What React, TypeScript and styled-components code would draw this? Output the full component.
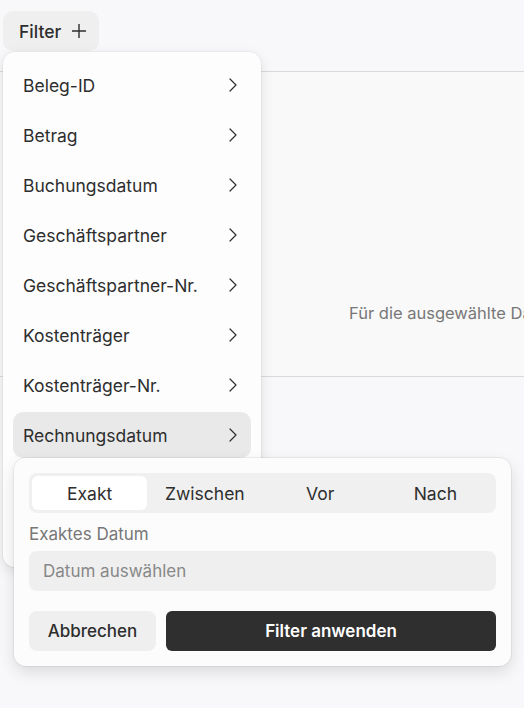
import React, { useState } from "react";
import styled, { createGlobalStyle } from "styled-components";

const GlobalStyle = createGlobalStyle`
	html, body {
		margin: 0;
		padding: 0;
		background-color: #f8f8fa;
		font-family: Inter, "Noto Sans", "Liberation Sans", sans-serif;
		color: #2e2e2e;
	}
	* {
		box-sizing: border-box;
	}
`;

const Page = styled.div`
	position: relative;
	width: 524px;
	height: 708px;
	overflow: hidden;
`;

const Toolbar = styled.div`
	height: 72px;
	padding: 11px 3px;
	border-bottom: 1px solid #dadada;
`;

const FilterButton = styled.button`
	height: 40px;
	display: flex;
	align-items: center;
	gap: 10px;
	padding: 0 12px 0 16px;
	border: 0;
	border-radius: 10px;
	background-color: #efefef;
	font-family: inherit;
	font-size: 17.5px;
	font-weight: 500;
	color: #2e2e2e;
	cursor: pointer;
`;

const EmptyState = styled.div`
	height: 305px;
	padding: 230px 0 0 349px;
	background-color: #f9f9f9;
	border-bottom: 1px solid #dadada;
	font-size: 16.5px;
	line-height: 22px;
	color: #777;
	white-space: nowrap;
	overflow: hidden;
`;

const Menu = styled.div`
	position: absolute;
	top: 52px;
	left: 3px;
	width: 258px;
	height: 515px;
	padding: 10px;
	display: flex;
	flex-direction: column;
	gap: 4px;
	background-color: #fdfdfd;
	border-radius: 12px;
	box-shadow: 0 0 0 1px rgba(0, 0, 0, 0.04), 0 4px 14px rgba(0, 0, 0, 0.1);
	z-index: 10;
`;

const MenuItem = styled.div<{ $active?: boolean }>`
	height: 46px;
	flex-shrink: 0;
	display: flex;
	align-items: center;
	justify-content: space-between;
	padding: 0 14px 0 10px;
	border-radius: 10px;
	background-color: ${(p) => (p.$active ? "#e9e9e9" : "transparent")};
	font-size: 17.5px;
	color: #2e2e2e;
	cursor: pointer;
`;

const Popover = styled.div`
	position: absolute;
	top: 458px;
	left: 14px;
	width: 497px;
	padding: 15px;
	background-color: #fcfcfc;
	border-radius: 12px;
	box-shadow: 0 0 0 1px rgba(0, 0, 0, 0.05), 0 6px 16px rgba(0, 0, 0, 0.12);
	z-index: 11;
`;

const Tabs = styled.div`
	height: 40px;
	padding: 3px;
	display: grid;
	grid-template-columns: repeat(4, 1fr);
	background-color: #f0f0f0;
	border-radius: 8px;
`;

const Tab = styled.button<{ $active?: boolean }>`
	border: 0;
	border-radius: 6px;
	background-color: ${(p) => (p.$active ? "#ffffff" : "transparent")};
	font-family: inherit;
	font-size: 17.5px;
	color: #2e2e2e;
	cursor: pointer;
`;

const FieldLabel = styled.div`
	margin-top: 10px;
	font-size: 17px;
	line-height: 22px;
	color: #777;
`;

const DateInput = styled.input`
	display: block;
	width: 100%;
	height: 40px;
	margin-top: 6px;
	padding: 0 14px;
	border: 0;
	border-radius: 8px;
	background-color: #efefef;
	font-family: inherit;
	font-size: 17px;
	color: #2e2e2e;
	outline: none;
	&::placeholder {
		color: #888;
	}
`;

const Actions = styled.div`
	display: flex;
	gap: 10px;
	margin-top: 20px;
`;

const ActionButton = styled.button<{ $primary?: boolean }>`
	height: 40px;
	flex: ${(p) => (p.$primary ? "1" : "0 0 127px")};
	border: 0;
	border-radius: ${(p) => (p.$primary ? "6px" : "8px")};
	background-color: ${(p) => (p.$primary ? "#2f2f2f" : "#efefef")};
	color: ${(p) => (p.$primary ? "#ffffff" : "#2e2e2e")};
	font-family: inherit;
	font-size: 17px;
	font-weight: ${(p) => (p.$primary ? 600 : 500)};
	cursor: pointer;
`;

const PlusIcon = () => (
	<svg width="16" height="16" viewBox="0 0 16 16" fill="none">
		<path d="M8 1v14M1 8h14" stroke="#2e2e2e" strokeWidth="1.4" />
	</svg>
);

const ChevronIcon = () => (
	<svg width="8" height="14" viewBox="0 0 8 14" fill="none">
		<path d="M1 1l6 6-6 6" stroke="#2e2e2e" strokeWidth="1.2" strokeLinecap="round" strokeLinejoin="round" />
	</svg>
);

const fields = [
	"Beleg-ID",
	"Betrag",
	"Buchungsdatum",
	"Geschäftspartner",
	"Geschäftspartner-Nr.",
	"Kostenträger",
	"Kostenträger-Nr.",
	"Rechnungsdatum",
];

const modes = ["Exakt", "Zwischen", "Vor", "Nach"];

const App: React.FC = () => {
	const [mode, setMode] = useState("Exakt");
	return (
		<Page>
			<GlobalStyle />
			<Toolbar>
				<FilterButton type="button">
					Filter
					<PlusIcon />
				</FilterButton>
			</Toolbar>
			<EmptyState>Für die ausgewählte Daten sind keine Einträge vorhanden.</EmptyState>
			<Menu>
				{fields.map((f) => (
					<MenuItem key={f} $active={f === "Rechnungsdatum"}>
						{f}
						<ChevronIcon />
					</MenuItem>
				))}
			</Menu>
			<Popover>
				<Tabs>
					{modes.map((m) => (
						<Tab key={m} type="button" $active={m === mode} onClick={() => setMode(m)}>
							{m}
						</Tab>
					))}
				</Tabs>
				<FieldLabel>Exaktes Datum</FieldLabel>
				<DateInput placeholder="Datum auswählen" />
				<Actions>
					<ActionButton type="button">Abbrechen</ActionButton>
					<ActionButton type="button" $primary>
						Filter anwenden
					</ActionButton>
				</Actions>
			</Popover>
		</Page>
	);
};

export default App;
